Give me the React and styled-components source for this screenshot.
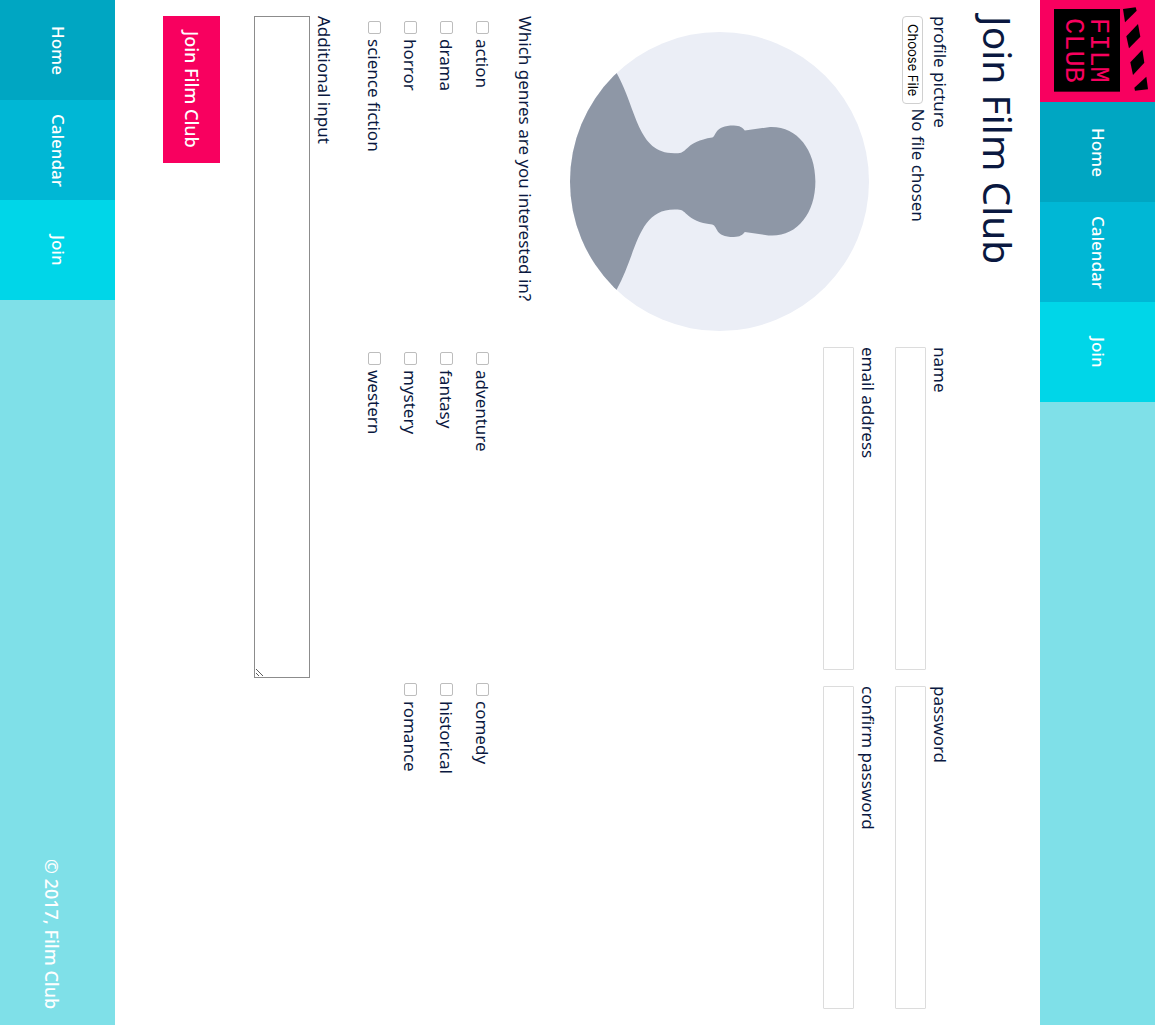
import React from "react";
import styled, { createGlobalStyle } from "styled-components";

const GlobalStyle = createGlobalStyle`
  *, *::before, *::after { box-sizing: border-box; }
  html, body { margin: 0; padding: 0; }
  body { background: #ffffff; }
`;

const sans = `"Noto Sans", "Open Sans", sans-serif`;

/* The whole page runs sideways: lines go top to bottom, blocks right to left. */
const Page = styled.div`
  writing-mode: vertical-rl;
  text-orientation: sideways;
  display: flex;
  flex-direction: column;
  height: 100vh;
  min-width: 100%;
  font-family: ${sans};
  font-size: 17px;
  line-height: 24px;
  color: #0a1840;
`;

const Bar = styled.div`
  display: flex;
  align-items: stretch;
  justify-content: space-between;
  block-size: 115px;
  background: #7fe0e8;
  color: #ffffff;
`;

const BarGroup = styled.div`
  display: flex;
`;

const LogoLink = styled.a`
  display: block;
  inline-size: 102px;
  background: #f8005f;

  svg {
    writing-mode: horizontal-tb;
    display: block;
    width: 115px;
    height: 102px;
  }
`;

const Nav = styled.nav`
  display: flex;
`;

const NavLink = styled.a`
  display: flex;
  align-items: center;
  justify-content: center;
  inline-size: 100px;
  background: ${(p) => p.$tone};
  color: #ffffff;
  font-weight: 500;
  text-decoration: none;
`;

const Copyright = styled.p`
  align-self: center;
  margin: 0;
  padding-inline-end: 16px;
  padding-block-start: 12px;
  font-size: 18px;
  font-weight: 500;
`;

const Main = styled.main`
  flex: 1;
  padding: 16px;
`;

const Title = styled.h1`
  margin: 0;
  font-size: 39px;
  font-weight: 400;
  line-height: 52px;
`;

const Profile = styled.div`
  display: grid;
  grid-template-columns: 1fr 2fr;
  margin-block-start: 20px;
`;

const PictureColumn = styled.div`
  display: flex;
  flex-direction: column;
  padding-inline-end: 16px;
`;

const FieldGrid = styled.div`
  display: grid;
  grid-template-columns: 1fr 1fr;
  align-content: start;
  column-gap: 16px;
  row-gap: 15px;
`;

const Field = styled.div`
  display: flex;
  flex-direction: column;
  gap: 2px;
`;

const TextInput = styled.input`
  writing-mode: vertical-rl;
  inline-size: 100%;
  block-size: 31px;
  margin: 0;
  padding: 4px;
  border: 1px solid #dcdcdc;
  border-radius: 1px;
  background: #ffffff;
  color: inherit;
  font: inherit;
`;

/* The button hangs below the text line, so the box overlaps the label's line. */
const FileInput = styled.input`
  writing-mode: vertical-rl;
  text-orientation: sideways;
  inline-size: 100%;
  block-size: 28px;
  margin-block-start: -4px;
  color: inherit;
  font: inherit;

  &::file-selector-button {
    block-size: 21px;
    margin: 0;
    margin-inline-end: 4px;
    padding-block: 0;
    padding-inline: 7px;
    border: 1px solid #d0d0d0;
    border-radius: 4px;
    background: #ffffff;
    color: #000000;
    font-family: Inter, sans-serif;
    font-size: 13px;
    line-height: 19px;
    vertical-align: -4px;
  }
`;

const Avatar = styled.svg`
  display: block;
  height: auto;
  inline-size: calc(100% - 16px);
  aspect-ratio: 1;
  margin-inline-start: 16px;
  margin-block-start: 33px;
`;

const Genres = styled.fieldset`
  min-inline-size: 0;
  margin: 0;
  margin-block-start: 33px;
  padding: 0;
  border: 0;
`;

const Legend = styled.legend`
  padding: 0;
  margin-block-end: 19px;
`;

const GenreGrid = styled.div`
  display: grid;
  grid-template-columns: repeat(3, 1fr);
  row-gap: 12px;
`;

const Choice = styled.label`
  display: flex;
  align-items: center;
  gap: 5px;
  padding-inline-start: 5px;
`;

const Tick = styled.input`
  appearance: none;
  width: 13px;
  height: 13px;
  margin: 0;
  border: 1px solid #bdbdbd;
  border-radius: 2px;
  background: #ffffff;

  &:checked {
    background: #00a5c0;
  }
`;

const Notes = styled(Field)`
  margin-block-start: 26px;
`;

const NotesBox = styled.div`
  position: relative;
  inline-size: calc(100% * 2 / 3);
`;

const TextArea = styled.textarea`
  writing-mode: vertical-rl;
  display: block;
  inline-size: 100%;
  block-size: 56px;
  margin: 0;
  padding: 2px;
  border: 1px solid #8c8c8c;
  border-radius: 0;
  background: #ffffff;
  color: inherit;
  font: inherit;
  resize: none;
`;

const Grip = styled.svg`
  position: absolute;
  left: 2px;
  bottom: 2px;
  width: 7px;
  height: 7px;
  pointer-events: none;
`;

const SubmitButton = styled.button`
  writing-mode: vertical-rl;
  text-orientation: sideways;
  display: block;
  margin: 0;
  margin-block-start: 34px;
  padding-block: 16px;
  padding-inline: 15px;
  border: 0;
  background: #f8005f;
  color: #ffffff;
  font-family: inherit;
  font-size: 18px;
  font-weight: 500;
  line-height: 25px;
`;

const links = [
  { label: "Home", tone: "#00a6c2" },
  { label: "Calendar", tone: "#00b7d5" },
  { label: "Join", tone: "#00d6e8" },
];

const genres = [
  "action", "adventure", "comedy",
  "drama", "fantasy", "historical",
  "horror", "mystery", "romance",
  "science fiction", "western",
];

const fields = [
  { id: "name", label: "name", type: "text" },
  { id: "password", label: "password", type: "password" },
  { id: "email", label: "email address", type: "email" },
  { id: "confirm", label: "confirm password", type: "password" },
];

function Logo() {
  return (
    <svg viewBox="15 0 345 306" role="img" aria-label="Film Club">
      <rect x="57" y="27" width="198" height="248" fill="#000000" />
      <g fill="#f8005f" fontFamily='"Liberation Mono", monospace' fontSize="81">
        <text transform="translate(167 54) rotate(90)">FILM</text>
        <text transform="translate(92 54) rotate(90)">CLUB</text>
      </g>
      <g fill="#000000">
        <path d="M264 27 302 22 305 32 270 67Z" />
        <path d="M274 109 309 72 316 110 282 145Z" />
        <path d="M286 187 322 149 328 188 294 225Z" />
        <path d="M334 230 339 268 300 272 298 263Z" />
      </g>
    </svg>
  );
}

function ProfileImage() {
  return (
    <Avatar viewBox="30 36 898 898" role="img" aria-label="Profile">
      <clipPath id="disc">
        <circle cx="479" cy="485" r="449" />
      </clipPath>
      <g clipPath="url(#disc)">
        <rect x="30" y="36" width="898" height="898" fill="#ebeef6" />
        <path
          fill="#8e97a6"
          d="M170 159C232 270 232 401 345 400H352C384 402 374 366 457 353C470 350 462 317 522 317C542 318 546 322 555 332L626 322C708 316 767 386 767 485C767 584 708 654 626 647L555 637C546 647 542 651 522 652C462 651 476 620 457 614C374 604 384 568 352 569H345C232 568 232 699 170 810L30 934V36Z"
        />
      </g>
    </Avatar>
  );
}

function Navigation({ label }) {
  return (
    <Nav aria-label={label}>
      {links.map((link) => (
        <NavLink key={link.label} href="#" $tone={link.tone}>
          {link.label}
        </NavLink>
      ))}
    </Nav>
  );
}

export default function App() {
  return (
    <Page>
      <GlobalStyle />
      <Bar as="header">
        <BarGroup>
          <LogoLink href="#">
            <Logo />
          </LogoLink>
          <Navigation label="Main" />
        </BarGroup>
      </Bar>
      <Main>
        <Title>Join Film Club</Title>
        <form>
          <Profile>
            <PictureColumn>
              <Field>
                <label htmlFor="picture">profile picture</label>
                <FileInput id="picture" type="file" />
              </Field>
              <ProfileImage />
            </PictureColumn>
            <FieldGrid>
              {fields.map((field) => (
                <Field key={field.id}>
                  <label htmlFor={field.id}>{field.label}</label>
                  <TextInput id={field.id} type={field.type} />
                </Field>
              ))}
            </FieldGrid>
          </Profile>
          <Genres>
            <Legend>Which genres are you interested in?</Legend>
            <GenreGrid>
              {genres.map((genre) => (
                <Choice key={genre}>
                  <Tick type="checkbox" name="genre" value={genre} />
                  {genre}
                </Choice>
              ))}
            </GenreGrid>
          </Genres>
          <Notes>
            <label htmlFor="notes">Additional input</label>
            <NotesBox>
              <TextArea id="notes" />
              <Grip viewBox="0 0 7 7" aria-hidden="true">
                <path d="M0 0 7 7M0 4 3 7" stroke="#5a5a5a" fill="none" />
              </Grip>
            </NotesBox>
          </Notes>
          <SubmitButton type="submit">Join Film Club</SubmitButton>
        </form>
      </Main>
      <Bar as="footer">
        <Navigation label="Footer" />
        <Copyright>© 2017, Film Club</Copyright>
      </Bar>
    </Page>
  );
}
